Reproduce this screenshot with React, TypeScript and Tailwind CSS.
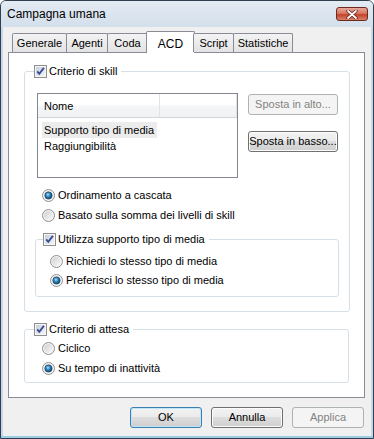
import React from 'react';

function CheckBox() {
  return (
    <svg width="13" height="13" viewBox="0 0 13 13" className="shrink-0">
      <defs>
        <linearGradient id="cbfill" x1="0" y1="0" x2="1" y2="1">
          <stop offset="0" stopColor="#c9ced6" />
          <stop offset="1" stopColor="#f4f5f7" />
        </linearGradient>
      </defs>
      <rect x="0.5" y="0.5" width="12" height="12" fill="#f6f6f6" stroke="#8e8f8f" />
      <rect x="2" y="2" width="9" height="9" fill="url(#cbfill)" />
      <path d="M3.2 6.3 L5.3 8.8 L9.9 2.8" fill="none" stroke="#3a4d9b" strokeWidth="1.9" />
    </svg>
  );
}

function Radio({ checked }: { checked?: boolean }) {
  return (
    <svg width="13" height="13" viewBox="0 0 13 13" className="shrink-0">
      <defs>
        <linearGradient id="rfill" x1="0" y1="0" x2="1" y2="1">
          <stop offset="0" stopColor="#cfcfcf" />
          <stop offset="1" stopColor="#fafafa" />
        </linearGradient>
        <radialGradient id="rdot" cx="0.42" cy="0.38" r="0.65">
          <stop offset="0" stopColor="#a8e6fb" />
          <stop offset="0.45" stopColor="#2d86bf" />
          <stop offset="1" stopColor="#0c3b62" />
        </radialGradient>
      </defs>
      <circle cx="6.5" cy="6.5" r="6" fill="#f5f5f5" stroke="#8f8f8f" />
      <circle cx="6.5" cy="6.5" r="4.6" fill="url(#rfill)" />
      {checked && <circle cx="6.5" cy="6.5" r="3.6" fill="url(#rdot)" stroke="#173f63" strokeWidth="0.7" />}
    </svg>
  );
}

function RadioRow({ label, checked, className }: { label: string; checked?: boolean; className: string }) {
  return (
    <div className={'flex items-center gap-[3px] ' + className}>
      <Radio checked={checked} />
      <span>{label}</span>
    </div>
  );
}

function Legend({ label, className }: { label: string; className: string }) {
  return (
    <legend className={'p-0 h-[13px] leading-[13px] ' + className}>
      <span className="flex items-center gap-[2px] h-[13px] pr-[4px]">
        <CheckBox />
        <span>{label}</span>
      </span>
    </legend>
  );
}

function Button({ label, kind, className }: { label: string; kind?: 'default' | 'disabled'; className: string }) {
  const base = 'h-[21px] rounded-[3px] border flex items-center justify-center ';
  if (kind === 'disabled') {
    return <div className={base + 'border-[#adb2b5] bg-[#f4f4f4] text-[#838383] ' + className}>{label}</div>;
  }
  if (kind === 'default') {
    return (
      <div className={base + 'border-[#3c7fb1] bg-[linear-gradient(#f2f2f2_0%,#ebebeb_49%,#dddddd_50%,#cfcfcf_100%)] shadow-[inset_0_0_0_1px_#bfe6f7] ' + className}>
        {label}
      </div>
    );
  }
  return (
    <div className={base + 'border-[#707070] bg-[linear-gradient(#f2f2f2_0%,#ebebeb_49%,#dddddd_50%,#cfcfcf_100%)] shadow-[inset_0_0_0_1px_#fcfcfc] ' + className}>
      {label}
    </div>
  );
}

const tabs = [
  { label: 'Generale', cls: 'w-[55px]' },
  { label: 'Agenti', cls: 'w-[42px] -ml-px' },
  { label: 'Coda', cls: 'w-[41px] -ml-px' },
  { label: 'ACD', cls: 'w-[49px] -ml-[2px] -mr-[2px]', active: true },
  { label: 'Script', cls: 'w-[41px]' },
  { label: 'Statistiche', cls: 'w-[60px] -ml-px' },
];

export default function App() {
  return (
    <div className="w-[374px] h-[439px] flex flex-col border border-[#2f3f50] rounded-t-[6px] bg-[#c6d8e9] font-['Liberation_Sans',Arial,sans-serif] text-[11px] text-black overflow-hidden">
      {/* title bar */}
      <div className="h-[26px] shrink-0 flex items-center justify-between pl-[6px] pr-[5px] bg-[linear-gradient(180deg,#e3ebf3,#d3dfeb)]">
        <span className="text-[12px]">Campagna umana</span>
        <div className="w-[32px] h-[14px] rounded-[3px] border border-[#6b2a20] bg-[linear-gradient(#e9a89a_0%,#d7775f_45%,#c4432b_55%,#d8806a_100%)] flex items-center justify-center">
          <svg width="12" height="9" viewBox="0 0 12 9">
            <path d="M2 1 L10 8 M10 1 L2 8" stroke="#5a1a12" strokeWidth="3.2" strokeLinecap="round" />
            <path d="M2 1 L10 8 M10 1 L2 8" stroke="#ffffff" strokeWidth="1.8" strokeLinecap="round" />
          </svg>
        </div>
      </div>

      {/* body */}
      <div className="mx-[2px] flex-1 bg-[#f0f0f0] flex flex-col pt-[4px]">
        <div className="relative z-10 flex items-end h-[21px] pl-[9px]">
          {tabs.map((t) =>
            t.active ? (
              <div key={t.label} className={'h-[22px] -mb-px bg-white border border-b-0 border-[#898c95] rounded-t-[2px] flex items-start justify-center pt-[3px] text-[12px] ' + t.cls}>
                {t.label}
              </div>
            ) : (
              <div key={t.label} className={'h-[19px] border border-b-0 border-[#898c95] rounded-t-[2px] bg-[linear-gradient(#f3f3f3,#e3e3e3)] flex items-center justify-center ' + t.cls}>
                {t.label}
              </div>
            )
          )}
        </div>

        <div className="w-[357px] h-[346px] ml-[5px] bg-white border border-[#898c95] flex flex-col">
          {/* Criterio di skill */}
          <fieldset className="ml-[15px] mt-[12px] w-[326px] h-[247px] border border-[#d5dfe5] rounded-[3px] p-0 m-0 min-w-0">
            <Legend label="Criterio di skill" className="ml-[9px]" />
            <div className="flex mt-[15px] ml-[12px]">
              <div className="w-[201px] h-[85px] border border-[#828790] bg-white flex flex-col">
                <div className="h-[24px] flex border-b border-[#d5d5d5] bg-[linear-gradient(#ffffff_0%,#ffffff_45%,#f4f5f7_55%,#f1f2f4_100%)]">
                  <div className="w-[122px] border-r border-[#e2e3e5] flex items-center pl-[6px] pt-[2px]">Nome</div>
                  <div className="flex-1 border-r border-[#e2e3e5]" />
                </div>
                <div className="pt-[4px] flex flex-col">
                  <div className="h-[16px] flex items-center">
                    <span className="ml-[4px] w-[115px] h-[16px] pl-[2px] flex items-center bg-[#ececec]">Supporto tipo di media</span>
                  </div>
                  <div className="h-[16px] flex items-center pl-[6px]">Raggiungibilità</div>
                </div>
              </div>
              <div className="ml-[10px] flex flex-col">
                <Button label="Sposta in alto..." kind="disabled" className="w-[90px] mt-px" />
                <Button label="Sposta in basso..." className="w-[90px] mt-[16px]" />
              </div>
            </div>
            <div className="mt-[7px] ml-[17px] flex flex-col">
              <RadioRow label="Ordinamento a cascata" checked className="h-[20px]" />
              <RadioRow label="Basato sulla somma dei livelli di skill" className="h-[20px]" />
            </div>
            <fieldset className="ml-[10px] mt-[8px] w-[304px] h-[64px] border border-[#d5dfe5] rounded-[3px] p-0 m-0 min-w-0">
              <Legend label="Utilizza supporto tipo di media" className="ml-[7px]" />
              <div className="mt-[6px] ml-[14px] flex flex-col">
                <RadioRow label="Richiedi lo stesso tipo di media" className="h-[19px]" />
                <RadioRow label="Preferisci lo stesso tipo di media" checked className="h-[19px]" />
              </div>
            </fieldset>
          </fieldset>

          {/* Criterio di attesa */}
          <fieldset className="ml-[15px] mt-[11px] w-[325px] h-[60px] border border-[#d5dfe5] rounded-[3px] p-0 m-0 min-w-0">
            <Legend label="Criterio di attesa" className="ml-[9px]" />
            <div className="mt-[2px] ml-[17px] flex flex-col">
              <RadioRow label="Ciclico" className="h-[20px]" />
              <RadioRow label="Su tempo di inattività" checked className="h-[20px]" />
            </div>
          </fieldset>
        </div>

        <div className="flex justify-end gap-[9px] pr-[7px] mt-[9px]">
          <Button label="OK" kind="default" className="w-[72px]" />
          <Button label="Annulla" className="w-[72px]" />
          <Button label="Applica" kind="disabled" className="w-[72px]" />
        </div>
      </div>
      <div className="h-[2px] shrink-0 bg-[#9ccfe3]" />
    </div>
  );
}
